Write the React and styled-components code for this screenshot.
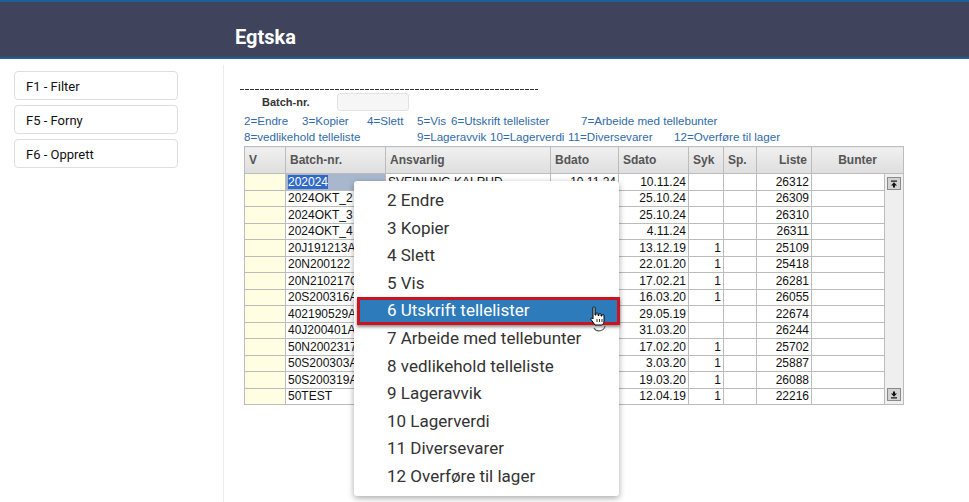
import React from "react"
import styled, { createGlobalStyle } from "styled-components"

const GlobalStyle = createGlobalStyle`
  html, body { margin: 0; padding: 0; background: #fff; }
  body { font-family: Roboto, "Liberation Sans", sans-serif; }
`

const Header = styled.header`
  box-sizing: border-box;
  height: 59px;
  background: #3f445c;
  border-top: 2px solid #1f5f96;
  border-bottom: 2px solid #1f5f96;
  padding: 23px 0 0 235px;
  color: #fff;
  font: 700 20px/24px Roboto, sans-serif;
`

const Main = styled.div`
  display: flex;
  margin-top: 6px;
  min-height: calc(100vh - 65px);
`

const Sidebar = styled.aside`
  box-sizing: border-box;
  width: 224px;
  border-right: 1px solid #ececec;
  padding: 6px 0 0 14px;
  display: flex;
  flex-direction: column;
  gap: 5px;
`

const SideButton = styled.button`
  box-sizing: border-box;
  width: 164px;
  height: 29px;
  padding: 1px 11px 0;
  border: 1px solid #dedede;
  border-radius: 4px;
  background: #fff;
  text-align: left;
  font: 400 13px Roboto, sans-serif;
  color: #111;
`

const Content = styled.section`
  flex: 1;
  padding: 24px 0 0 16px;
  font-family: "Liberation Sans", Arial, sans-serif;
`

const Dashes = styled.div`
  width: 298px;
  height: 1px;
  background: repeating-linear-gradient(to right, #333 0 4px, transparent 4px 5px);
`

const BatchRow = styled.div`
  display: flex;
  align-items: center;
  margin-top: 3px;
  padding-left: 22px;
  height: 18px;
`

const BatchLabel = styled.span`
  width: 75px;
  font-weight: 700;
  font-size: 11px;
  color: #333;
`

const BatchInput = styled.input`
  box-sizing: border-box;
  width: 72px;
  height: 18px;
  border: 1px solid #e2e2e2;
  border-radius: 3px;
  background: #f6f6f6;
`

const Legend = styled.div`
  margin: 2px 0 1px 4px;
`

const LegendLine = styled.div`
  display: flex;
  height: 16px;
  line-height: 16px;
  font-size: 11.6px;
  color: #2f6aa8;
  white-space: nowrap;
`

const Key = styled.span`
  width: ${p => (p.$w ? `${p.$w}px` : "auto")};
  flex: none;
`

const TableWrap = styled.div`
  position: relative;
  margin-left: 4px;
  width: 659px;
`

const Grid = styled.table`
  border-collapse: collapse;
  table-layout: fixed;
  width: 659px;
  font-size: 12px;
  color: #111;
  border: 1px solid #b8b8b8;
`

const Th = styled.th`
  height: 26px;
  padding: 0 4px;
  border: 1px solid #bcbcbc;
  background: linear-gradient(#f0f0f0, #dedede);
  color: #555;
  font-weight: 700;
  font-size: 12px;
  text-align: ${p => p.$align || "left"};
`

const Tr = styled.tr`
  height: 16.4px;
`

const Td = styled.td`
  padding: 0 2px;
  border: 1px solid #bcbcbc;
  white-space: nowrap;
  overflow: hidden;
  line-height: 14px;
  text-align: ${p => p.$align || "left"};
  background: ${p => (p.$v ? "#fffde2" : p.$sel ? "#a7b8ce" : "#fff")};
`

const Selected = styled.span`
  background: #3169c6;
  color: #fff;
`

const ScrollCell = styled.td`
  padding: 0;
  border: 1px solid #bcbcbc;
  background: #efefef;
  vertical-align: top;
`

const ScrollTrack = styled.div`
  height: 224px;
  display: flex;
  flex-direction: column;
  justify-content: space-between;
  align-items: center;
  padding: 3px 0;
`

const ScrollBtn = styled.div`
  box-sizing: border-box;
  width: 14px;
  height: 13px;
  border: 1px solid #8a8a8a;
  background: #d2d2d2;
  display: flex;
  align-items: center;
  justify-content: center;
`

const Menu = styled.ul`
  position: absolute;
  left: 110px;
  top: 35px;
  box-sizing: border-box;
  width: 265px;
  height: 315px;
  margin: 0;
  padding: 6px 0 0;
  list-style: none;
  background: #fff;
  border-radius: 3px;
  box-shadow: 0 2px 6px rgba(0, 0, 0, 0.35);
  font: 400 17px Roboto, sans-serif;
  color: #333;
`

const MenuItem = styled.li`
  box-sizing: border-box;
  height: 27.6px;
  line-height: ${p => (p.$active ? "21.6px" : "27.6px")};
  padding-left: ${p => (p.$active ? "27px" : "33px")};
  margin: ${p => (p.$active ? "0 -1px 0 3px" : "0")};
  background: ${p => (p.$active ? "#2e7bbc" : "transparent")};
  color: ${p => (p.$active ? "#fff" : "#333")};
  border: ${p => (p.$active ? "3px solid #c8151f" : "none")};
  box-shadow: ${p => (p.$active ? "0 2px 3px rgba(0,0,0,0.45)" : "none")};
  position: relative;
  white-space: nowrap;
`

const Cursor = styled.svg`
  position: absolute;
  left: 228px;
  top: 6px;
`

const rows = [
  ["202024", "SVEINUNG KALRUD", "10.11.24", "10.11.24", "", "26312"],
  ["2024OKT_2", "", "", "25.10.24", "", "26309"],
  ["2024OKT_3", "", "", "25.10.24", "", "26310"],
  ["2024OKT_4", "", "", "4.11.24", "", "26311"],
  ["20J191213A", "", "", "13.12.19", "1", "25109"],
  ["20N200122", "", "", "22.01.20", "1", "25418"],
  ["20N210217C", "", "", "17.02.21", "1", "26281"],
  ["20S200316A", "", "", "16.03.20", "1", "26055"],
  ["402190529A", "", "", "29.05.19", "", "22674"],
  ["40J200401A", "", "", "31.03.20", "", "26244"],
  ["50N2002317", "", "", "17.02.20", "1", "25702"],
  ["50S200303A", "", "", "3.03.20", "1", "25887"],
  ["50S200319A", "", "", "19.03.20", "1", "26088"],
  ["50TEST", "", "", "12.04.19", "1", "22216"],
]

const menuItems = [
  "2 Endre", "3 Kopier", "4 Slett", "5 Vis", "6 Utskrift tellelister",
  "7 Arbeide med tellebunter", "8 vedlikehold telleliste", "9 Lageravvik",
  "10 Lagerverdi", "11 Diversevarer", "12 Overføre til lager",
]

function Arrow({ down }) {
  return (
    <svg width="8" height="8" viewBox="0 0 8 8" style={down ? { transform: "rotate(180deg)" } : null}>
      <rect x="1" y="0.5" width="6" height="1.2" fill="#111" />
      <path d="M4 2.3 L7 5.5 H5 V7.5 H3 V5.5 H1 Z" fill="#111" />
    </svg>
  )
}

export default function App() {
  return (
    <>
      <GlobalStyle />
      <Header>Egtska</Header>
      <Main>
        <Sidebar>
          <SideButton>F1 - Filter</SideButton>
          <SideButton>F5 - Forny</SideButton>
          <SideButton>F6 - Opprett</SideButton>
        </Sidebar>
        <Content>
          <Dashes />
          <BatchRow>
            <BatchLabel>Batch-nr.</BatchLabel>
            <BatchInput />
          </BatchRow>
          <Legend>
            <LegendLine>
              <Key $w={58}>2=Endre</Key>
              <Key $w={65}>3=Kopier</Key>
              <Key $w={50}>4=Slett</Key>
              <Key $w={34}>5=Vis</Key>
              <Key $w={130}>6=Utskrift tellelister</Key>
              <Key>7=Arbeide med tellebunter</Key>
            </LegendLine>
            <LegendLine>
              <Key $w={173}>8=vedlikehold telleliste</Key>
              <Key $w={73}>9=Lageravvik</Key>
              <Key $w={78}>10=Lagerverdi</Key>
              <Key $w={106}>11=Diversevarer</Key>
              <Key>12=Overføre til lager</Key>
            </LegendLine>
          </Legend>
          <TableWrap>
            <Grid>
              <colgroup>
                <col style={{ width: 41 }} />
                <col style={{ width: 100 }} />
                <col style={{ width: 165 }} />
                <col style={{ width: 68 }} />
                <col style={{ width: 70 }} />
                <col style={{ width: 35 }} />
                <col style={{ width: 33 }} />
                <col style={{ width: 55 }} />
                <col style={{ width: 73 }} />
                <col style={{ width: 19 }} />
              </colgroup>
              <thead>
                <tr>
                  <Th>V</Th>
                  <Th>Batch-nr.</Th>
                  <Th>Ansvarlig</Th>
                  <Th>Bdato</Th>
                  <Th>Sdato</Th>
                  <Th>Syk</Th>
                  <Th>Sp.</Th>
                  <Th $align="right">Liste</Th>
                  <Th $align="center" colSpan={2}>Bunter</Th>
                </tr>
              </thead>
              <tbody>
                {rows.map((r, i) => (
                  <Tr key={r[0]}>
                    <Td $v />
                    <Td $sel={i === 0}>{i === 0 ? <Selected>{r[0]}</Selected> : r[0]}</Td>
                    <Td>{r[1]}</Td>
                    <Td $align="right">{r[2]}</Td>
                    <Td $align="right">{r[3]}</Td>
                    <Td $align="right">{r[4]}</Td>
                    <Td />
                    <Td $align="right">{r[5]}</Td>
                    <Td />
                    {i === 0 && (
                      <ScrollCell rowSpan={rows.length}>
                        <ScrollTrack>
                          <ScrollBtn><Arrow /></ScrollBtn>
                          <ScrollBtn><Arrow down /></ScrollBtn>
                        </ScrollTrack>
                      </ScrollCell>
                    )}
                  </Tr>
                ))}
              </tbody>
            </Grid>
            <Menu>
              {menuItems.map((m, i) => (
                <MenuItem key={m} $active={i === 4}>
                  {m}
                  {i === 4 && (
                    <Cursor width="20" height="26" viewBox="0 0 20 26">
                      <path d="M6 22 A6 6 0 0 0 17 20" fill="none" stroke="#555" strokeWidth="1.2" />
                      <path d="M5 1.5 C5 0.8 7 0.8 7 1.5 V9 H8 V7.5 C8 6.8 10 6.8 10 7.5 V9.5 H11 V8.3 C11 7.6 13 7.6 13 8.3 V10 H14 V9.2 C14 8.5 16 8.5 16 9.2 V15 C16 17 15 18.5 14 19 H7 L3 13.5 C2.5 12.5 3.8 11.6 4.6 12.5 L5 13 Z" fill="#fff" stroke="#000" strokeWidth="1" />
                      <path d="M9 13 V16 M11.5 13 V16 M14 13 V16" stroke="#000" strokeWidth="0.8" />
                    </Cursor>
                  )}
                </MenuItem>
              ))}
            </Menu>
          </TableWrap>
        </Content>
      </Main>
    </>
  )
}
